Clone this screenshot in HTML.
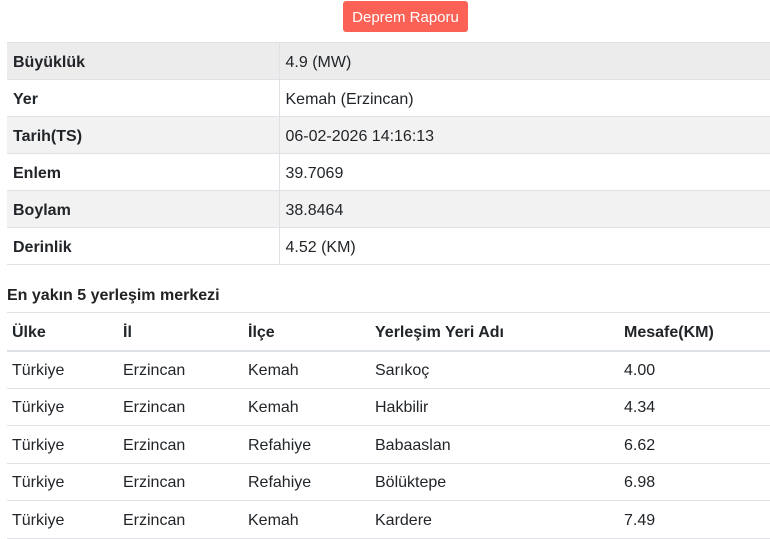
<!DOCTYPE html>
<html><head><meta charset="utf-8"><style>
body{margin:0;background:#fff;font-family:"Liberation Sans",sans-serif;font-size:16px;color:#212529;width:770px;height:538px;overflow:hidden}
.btn{position:absolute;left:343px;top:1px;width:125px;height:31px;background:#fb6155;color:#fff;border-radius:3px;font-size:15px;line-height:33px;text-align:center}
table{position:absolute;left:7px;width:763px;border-collapse:collapse}
td,th{box-sizing:border-box}
#t1{top:42px}
#t1 td{height:37px;padding:3px 6px 0;border:1px solid #dee2e6;border-left:none;border-right:none}
#t1 td:first-child{width:272px;font-weight:bold;border-right:1px solid #dee2e6}
#t1 tr:nth-child(odd){background:#f2f2f2}
#t1 tr:first-child{background:#ececec}
.h{position:absolute;left:7px;top:287px;font-size:16px;font-weight:bold;color:#222}
#t2{top:312px;border-top:1px solid #dee2e6}
#t2 th{text-align:left;height:38px;padding:3px 5px 0;border-bottom:2px solid #dee2e6}
#t2 td{height:37.5px;padding:3px 5px 0;border-bottom:1px solid #dee2e6}
</style></head><body>
<div class="btn">Deprem Raporu</div>
<table id="t1">
<tr><td>Büyüklük</td><td>4.9 (MW)</td></tr>
<tr><td>Yer</td><td>Kemah (Erzincan)</td></tr>
<tr><td>Tarih(TS)</td><td>06-02-2026 14:16:13</td></tr>
<tr><td>Enlem</td><td>39.7069</td></tr>
<tr><td>Boylam</td><td>38.8464</td></tr>
<tr><td>Derinlik</td><td>4.52 (KM)</td></tr>
</table>
<div class="h">En yakın 5 yerleşim merkezi</div>
<table id="t2">
<colgroup><col style="width:111px"><col style="width:125px"><col style="width:127px"><col style="width:249px"><col></colgroup>
<tr><th>Ülke</th><th>İl</th><th>İlçe</th><th>Yerleşim Yeri Adı</th><th>Mesafe(KM)</th></tr>
<tr><td>Türkiye</td><td>Erzincan</td><td>Kemah</td><td>Sarıkoç</td><td>4.00</td></tr>
<tr><td>Türkiye</td><td>Erzincan</td><td>Kemah</td><td>Hakbilir</td><td>4.34</td></tr>
<tr><td>Türkiye</td><td>Erzincan</td><td>Refahiye</td><td>Babaaslan</td><td>6.62</td></tr>
<tr><td>Türkiye</td><td>Erzincan</td><td>Refahiye</td><td>Bölüktepe</td><td>6.98</td></tr>
<tr><td>Türkiye</td><td>Erzincan</td><td>Kemah</td><td>Kardere</td><td>7.49</td></tr>
</table>
</body></html>
